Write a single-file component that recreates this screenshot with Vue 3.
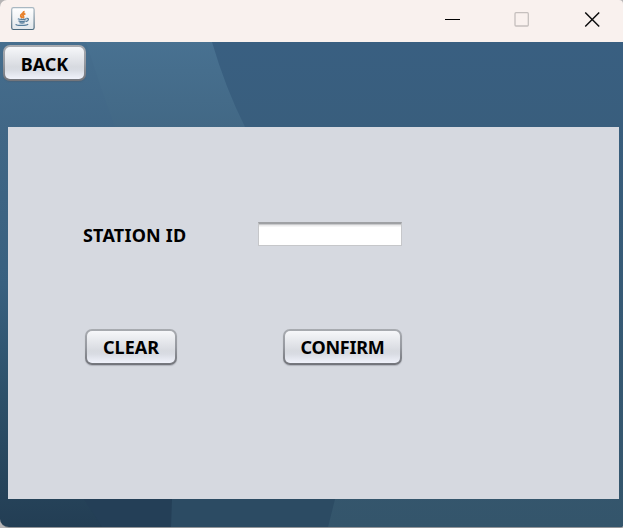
<script setup>
import { ref } from 'vue'

const stationId = ref('')
</script>

<template>
  <div class="desktop">
    <div class="window">
      <header class="titlebar">
        <svg class="java" width="24" height="24" viewBox="0 0 24 24">
          <defs>
            <linearGradient id="tile" x1="0" y1="0" x2="0" y2="1">
              <stop offset="0" stop-color="#ffffff" />
              <stop offset="1" stop-color="#e2e7eb" />
            </linearGradient>
            <linearGradient id="rim" x1="0" y1="0" x2="0" y2="1">
              <stop offset="0" stop-color="#a9b8c2" />
              <stop offset="1" stop-color="#49687c" />
            </linearGradient>
          </defs>
          <rect x="0.7" y="0.7" width="22.4" height="21.8" rx="1.8" fill="url(#tile)" stroke="url(#rim)" stroke-width="1.2" />
          <path d="M12.8 4c.8 2.4-4 3-3 5.2.3.7 1 1.2 1.5 1.9M14.4 6.6c-2.5.9-2.9 1.9-2 2.9.4.5.2 1-.6 1.6" fill="none" stroke="#e8822c" stroke-width="1.9" />
          <path d="M6.8 11.8c1.5.8 6.3.8 8.4 0M7.5 13.8c2 .7 5 .7 7 0M8.5 15.6c1.6.5 3.6.5 5.1 0M15.4 11.5c3-.6 2.5 2.5-.6 3M4.6 17.4c1.5 1.5 10.5 1.3 12.6-.2" fill="none" stroke="#557d9b" stroke-width="1.3" />
        </svg>
        <div class="controls">
          <svg width="16" height="16" viewBox="0 0 16 16"><path d="M0 7.5h15" stroke="#000" /></svg>
          <svg width="16" height="16" viewBox="0 0 16 16"><rect x="1" y="0.7" width="13.3" height="13.3" rx="1" fill="none" stroke="#c5bfbd" stroke-width="1.3" /></svg>
          <svg width="16" height="16" viewBox="0 0 16 16"><path d="M.7.5l14 14M14.7.5l-14 14" stroke="#111" stroke-width="1.5" /></svg>
        </div>
      </header>

      <main class="content">
        <svg class="backdrop" viewBox="0 42 623 485" preserveAspectRatio="none">
          <defs>
            <linearGradient id="left" x1="0" y1="0" x2="0" y2="1">
              <stop offset="0" stop-color="#466e8e" />
              <stop offset=".18" stop-color="#416786" />
              <stop offset=".5" stop-color="#38607f" />
              <stop offset=".73" stop-color="#2d5069" />
              <stop offset="1" stop-color="#233e54" />
            </linearGradient>
            <linearGradient id="band" x1="0" y1="0" x2="0" y2="1">
              <stop offset="0" stop-color="#487191" />
              <stop offset=".18" stop-color="#426885" />
              <stop offset="1" stop-color="#233f56" />
            </linearGradient>
            <linearGradient id="right" x1="0" y1="0" x2="0" y2="1">
              <stop offset="0" stop-color="#395f81" />
              <stop offset=".18" stop-color="#395e7d" />
              <stop offset="1" stop-color="#34556b" />
            </linearGradient>
          </defs>
          <rect y="42" width="623" height="485" fill="url(#left)" />
          <path d="M86 42Q100 86 115 127L180 300L102 527H300V42Z" fill="url(#band)" />
          <path d="M212 42Q225 87 245 127L340 300L171 527H623V42Z" fill="url(#right)" />
          <path d="M84 499L102 527H172V499Z" fill="#243f57" />
          <path d="M172 499L171 527H328L335 499Z" fill="#2c4b63" />
        </svg>

        <button class="btn back"><span>BACK</span></button>

        <section class="panel">
          <label class="label" for="station"><span>STATION ID</span></label>
          <input id="station" v-model="stationId" class="field" type="text" />
          <button class="btn clear" @click="stationId = ''"><span>CLEAR</span></button>
          <button class="btn confirm"><span>CONFIRM</span></button>
        </section>
      </main>
    </div>
  </div>
</template>

<style>
body { margin: 0; overflow: hidden; }
</style>

<style scoped>
.desktop {
  width: 623px;
  height: 528px;
  background: #b6b4b5;
  font-family: "Noto Sans", "Open Sans", sans-serif;
}
.window {
  box-sizing: border-box;
  height: 528px;
  border-bottom: 1px solid #929599;
  border-radius: 7px 4px 3px 9px;
  overflow: hidden;
}
.titlebar {
  height: 42px;
  background: #f9f1ee;
  display: flex;
  justify-content: space-between;
}
.java { margin: 7px 0 0 11px; }
.controls {
  display: flex;
  gap: 53px;
  padding: 12px 23px 0 0;
}
.controls svg { width: 16px; height: 16px; }
.controls svg:first-child,
.controls svg:nth-child(2) {
  transform: translateX(-1px);
}
.controls svg:last-child {
  transform: translateX(0.5px);
}
.content {
  position: relative;
  height: 485px;
}
.backdrop {
  position: absolute;
  inset: 0;
  width: 623px;
  height: 485px;
}
.btn {
  position: relative;
  box-sizing: border-box;
  height: 36px;
  padding: 0;
  border: 2px solid transparent;
  border-radius: 7px;
  background:
    linear-gradient(#f6f7fa 0%, #e7e9ed 30%, #d7dae0 62%, #d9dce3 72%, #f0f2fb 100%) padding-box,
    linear-gradient(#a8abb0, #9699a0 50%, #72747a) border-box;
  box-shadow: 0 1px 1px rgba(80, 84, 94, .28);
  color: #000;
  font: bold 18px/32px "Noto Sans", "Open Sans", sans-serif;
  white-space: nowrap;
}
.btn span, .label span {
  display: inline-block;
}
.back {
  display: block;
  width: 83px;
  margin: 0 0 0 3px;
  top: 3px;
}
.back span { padding-top: 1px; line-height: 33px; }
.panel {
  position: relative;
  box-sizing: border-box;
  width: 611px;
  height: 372px;
  margin: 49px 0 0 8px;
  padding: 95px 0 0 75px;
  background: #d6d9e0;
  display: grid;
  grid-template-columns: 175px 144px;
  grid-template-rows: 24px 36px;
  row-gap: 83px;
}
.label {
  font: bold 18px/26px "Noto Sans", "Open Sans", sans-serif;
  letter-spacing: 0.2px;
  white-space: nowrap;
}
.field {
  box-sizing: border-box;
  width: 144px;
  height: 24px;
  padding: 3px 6px;
  border: 1px solid #c6c7ca;
  border-top: 2px solid #9fa1a4;
  border-radius: 0;
  outline: none;
  background: linear-gradient(#c9cacc 0 1px, #ebebec 1px 2px, #fff 3px);
  font: 15px "Noto Sans", sans-serif;
}
.clear { width: 92px; margin-left: 2px; }
.confirm { width: 119px; margin-left: 25px; letter-spacing: -0.25px; }
</style>
